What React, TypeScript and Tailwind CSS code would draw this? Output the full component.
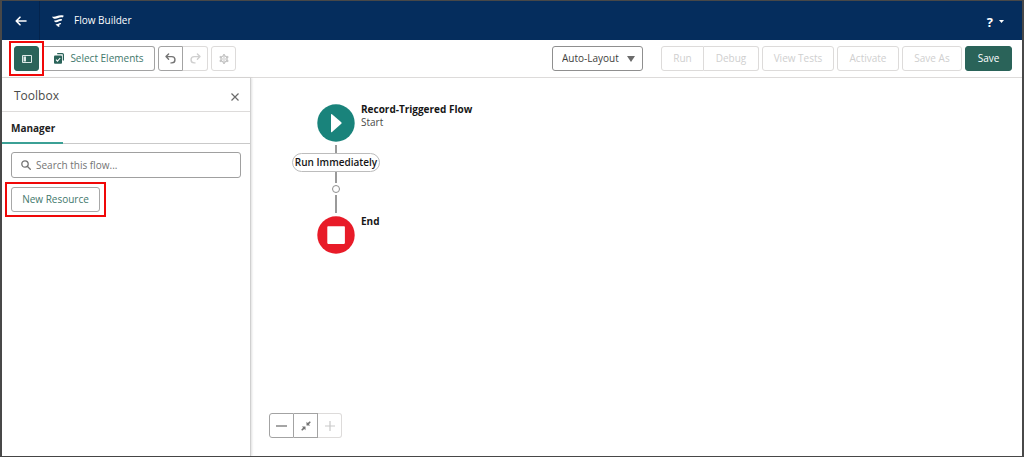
import type { ButtonHTMLAttributes } from "react";

function Button({ className = "", ...rest }: ButtonHTMLAttributes<HTMLButtonElement>) {
  return (
    <button
      type="button"
      className={`flex h-[25px] shrink-0 items-center justify-center whitespace-nowrap border ${className}`}
      {...rest}
    />
  );
}

function Highlight({ className }: { className: string }) {
  return <span aria-hidden="true" className={`pointer-events-none absolute border-[#f00808] ${className}`} />;
}

function Header() {
  return (
    <header className="flex h-[39px] shrink-0 items-center bg-[#052d5d] text-white">
      <a href="#back" aria-label="Back" className="flex h-full w-[38px] items-center justify-center border-r border-[#04244d]">
        <svg width="12" height="10" viewBox="0 0 12 10" fill="none" stroke="currentColor" strokeWidth="1.6" strokeLinecap="round" strokeLinejoin="round">
          <path d="M11 5H1.2M5 1.2L1.2 5L5 8.8" />
        </svg>
      </a>
      <svg className="ml-3" width="12" height="12" viewBox="0 0 12 12" fill="currentColor">
        <path d="M.2 1.5C3.4 3 6-.8 11.4 .6Q11.9 .8 11.5 1.3L10.7 2.4C6.8 1.6 4.6 5 1.2 3.2Q.3 2.6 .2 1.5Z" />
        <path d="M2.2 5.4C4.6 6.4 6.2 3.6 9.8 4.2Q10.3 4.4 10 4.9L9.4 5.8C6.8 5.6 5.4 8.2 3 6.9Q2.3 6.4 2.2 5.4Z" />
        <path d="M3.6 9C5.4 10 6.6 7.6 8.8 8Q9.3 8.2 9 8.6L8.4 9.4C6.8 9.4 6.8 11.2 8 11C6.6 12.4 5.6 11.6 5.4 10.7Q4 10.6 3.6 9Z" />
      </svg>
      <h1 className="ml-2.5 text-[10px]">Flow Builder</h1>
      <button type="button" aria-label="Help" className="ml-auto mr-[18px] flex items-center gap-1.5 pt-0.5">
        <span className="text-[13px] font-bold leading-4">?</span>
        <svg width="5" height="3" viewBox="0 0 5 3" fill="currentColor"><path d="M0 0H5L2.5 3Z" /></svg>
      </button>
    </header>
  );
}

function Toolbar() {
  return (
    <div className="flex h-[38px] shrink-0 items-center border-b border-[#dddbda] pl-3 pr-2.5">
      <div className="relative z-10 bg-white pr-[5px]">
        <div className="relative">
          <Button aria-label="Toggle toolbox" className="w-[25px] rounded-[3px] border-[#2a6359] bg-[#2a6359] text-white">
            <svg width="10" height="8" viewBox="0 0 10 8" fill="none">
              <path d="M.5 .5H9.5V7.5H.5Z" stroke="#dce9e6" />
              <path d="M1.5 1.5H4V6.5H1.5Z" fill="#dce9e6" />
            </svg>
          </Button>
          <Highlight className="-inset-[5px] border-2" />
        </div>
      </div>
      <Button className="w-[111px] rounded-r-[3px] border-l-0 border-[#a3a3a3] text-[#3f786c]">
        <svg className="mr-1.5" width="10" height="11" viewBox="0 0 10 11" fill="none">
          <path d="M3.2 .6H8.4Q9.4 .6 9.4 1.6V7.4" stroke="#2a6359" strokeWidth="1.2" />
          <rect x="0" y="2.4" width="8" height="8.4" rx="1" fill="#2a6359" />
          <path d="M2 6.6L3.5 8.1L6.2 5" stroke="#fff" strokeWidth="1.1" />
        </svg>
        Select Elements
      </Button>
      <div className="ml-[3px] flex">
        <Button aria-label="Undo" className="w-[25px] rounded-l-[3px] border-[#a3a3a3] text-[#747474]">
          <svg width="11" height="11" viewBox="0 0 11 11" fill="none" stroke="currentColor" strokeWidth="1.4" strokeLinecap="round" strokeLinejoin="round">
            <path d="M3.6 1L1 3.6L3.6 6.2M1.3 3.6H6.8A3.1 3.1 0 0 1 6.8 9.9H6" />
          </svg>
        </Button>
        <Button aria-label="Redo" disabled className="w-[25px] rounded-r-[3px] border-l-0 border-[#dddbda] text-[#cfcfcf]">
          <svg width="11" height="11" viewBox="0 0 11 11" fill="none" stroke="currentColor" strokeWidth="1.4" strokeLinecap="round" strokeLinejoin="round">
            <path d="M7.4 1L10 3.6L7.4 6.2M9.7 3.6H4.2A3.1 3.1 0 0 0 4.2 9.9H5" />
          </svg>
        </Button>
      </div>
      <Button aria-label="Settings" disabled className="ml-[3px] w-[25px] rounded-[3px] border-[#dddbda] text-[#c4c4c4]">
        <svg width="10" height="10" viewBox="0 0 10 10" fill="none" stroke="currentColor">
          <circle cx="5" cy="5" r="3.1" strokeWidth="1.3" />
          <circle cx="5" cy="5" r="1.3" strokeWidth=".8" />
          <path d="M5 0V1.8M5 8.2V10M.7 2.5L2.2 3.4M7.8 6.6L9.3 7.5M.7 7.5L2.2 6.6M7.8 3.4L9.3 2.5" strokeWidth="1.7" />
        </svg>
      </Button>

      <div className="relative ml-auto">
        <select aria-label="Layout" className="h-[25px] w-[91px] appearance-none rounded-[3px] border border-[#8f8f8f] bg-white pl-[9px] text-[10px] text-[#3e3e3c]">
          <option>Auto-Layout</option>
          <option>Free-Form</option>
        </select>
        <svg className="pointer-events-none absolute right-2 top-2.5" width="8" height="6" viewBox="0 0 8 6" fill="#6b6b6b"><path d="M0 0H8L4 6Z" /></svg>
      </div>
      <div className="ml-[18px] flex">
        <Button disabled className="w-[43px] rounded-l-[3px] border-[#dddbda] text-[#cfcfcf]">Run</Button>
        <Button disabled className="w-[55px] rounded-r-[3px] border-l-0 border-[#dddbda] text-[#cfcfcf]">Debug</Button>
      </div>
      <div className="ml-[3px] flex gap-[3px]">
        <Button disabled className="w-[72px] rounded-[3px] border-[#dddbda] text-[#cfcfcf]">View Tests</Button>
        <Button disabled className="w-[62px] rounded-[3px] border-[#dddbda] text-[#cfcfcf]">Activate</Button>
        <Button disabled className="w-[60px] rounded-[3px] border-[#dddbda] text-[#cfcfcf]">Save As</Button>
        <Button className="w-[47px] rounded-[3px] border-[#2a6359] bg-[#2a6359] text-white">Save</Button>
      </div>
    </div>
  );
}

function Toolbox() {
  return (
    <aside className="w-[249px] shrink-0 border-r border-[#d0d0d0] shadow-[1px_0_2px_rgba(0,0,0,0.12)]">
      <div className="flex h-[34px] items-center justify-between border-b border-[#dddbda] pl-3 pr-[9px]">
        <h2 className="pt-0.5 text-[12px] text-[#4a4a48]">Toolbox</h2>
        <button type="button" aria-label="Close toolbox" className="p-0.5 pt-1.5 text-[#6b6b6b]">
          <svg width="8" height="8" viewBox="0 0 8 8" stroke="currentColor" strokeWidth="1.2"><path d="M.5 .5L7.5 7.5M7.5 .5L.5 7.5" /></svg>
        </button>
      </div>
      <div role="tablist" className="flex h-8 border-b border-[#c9c9c9]">
        <button type="button" role="tab" aria-selected="true" className="-mb-px w-[61px] border-b-2 border-[#3ba095] pl-[9px] pt-0.5 text-left font-bold text-[#222]">
          Manager
        </button>
      </div>
      <div className="flex flex-col items-start gap-[9px] px-[9px] pt-2">
        <label className="flex h-[26px] w-full items-center gap-[5px] rounded-[3px] border border-[#a0a0a0] px-[9px]">
          <svg className="shrink-0" width="10" height="10" viewBox="0 0 10 10" fill="none" stroke="#747474" strokeWidth="1.3" strokeLinecap="round">
            <circle cx="4" cy="4" r="3.2" /><path d="M6.5 6.5L9.3 9.3" />
          </svg>
          <input type="search" aria-label="Search this flow" placeholder="Search this flow..." className="min-w-0 flex-1 bg-transparent outline-none placeholder:text-[#747474]" />
        </label>
        <div className="relative">
          <Button className="w-[89px] rounded-[3px] border-[#a8a8a8] text-[#3f786c]">New Resource</Button>
          <Highlight className="-inset-x-1.5 -inset-y-[5px] border-2" />
        </div>
      </div>
    </aside>
  );
}

function Flow() {
  return (
    <div className="grid grid-cols-[88px_1fr] gap-x-1.5 leading-[13px] text-[#161616]">
      <svg className="justify-self-center" width="38" height="38" viewBox="0 0 38 38">
        <circle cx="19" cy="19" r="18.7" fill="#19837b" />
        <path d="M14 10.5Q14 9.5 15 10.2L24.3 18.3Q25 19 24.3 19.7L15 28Q14 28.7 14 27.7Z" fill="#fff" />
      </svg>
      <div className="-ml-[25px] -mt-px">
        <p className="font-bold">Record-Triggered Flow</p>
        <p className="text-[#4a4a48]">Start</p>
      </div>
      <div className="col-start-1 flex flex-col items-center">
        <span className="mt-[3px] h-2 w-0.5 bg-[#9a9a9a]" />
        <span className="flex h-[19px] w-[88px] items-center justify-center whitespace-nowrap rounded-full border border-[#bcbcbc] bg-white font-semibold">
          Run Immediately
        </span>
        <span className="h-[11px] w-0.5 bg-[#9a9a9a]" />
        <button type="button" aria-label="Add element" className="my-0.5 size-2 rounded-full border border-[#8f8f8f] bg-white" />
        <span className="mb-[3px] h-[18px] w-0.5 bg-[#9a9a9a]" />
      </div>
      <svg className="col-start-1 justify-self-center" width="38" height="38" viewBox="0 0 38 38">
        <circle cx="19" cy="19" r="18.7" fill="#e81b28" />
        <rect x="10.3" y="10.3" width="17.6" height="17.6" rx=".8" fill="#fff" />
      </svg>
      <p className="-ml-[25px] -mt-px font-bold">End</p>
    </div>
  );
}

function ZoomControls() {
  return (
    <div className="mt-auto flex">
      <Button aria-label="Zoom out" className="w-[25px] rounded-l-[3px] border-[#a3a3a3] text-[#747474]">
        <svg width="11" height="2" viewBox="0 0 11 2"><path d="M0 1H11" stroke="currentColor" strokeWidth="1.3" /></svg>
      </Button>
      <Button aria-label="Zoom to fit" className="w-6 border-l-0 border-[#a3a3a3] text-[#747474]">
        <svg width="10" height="10" viewBox="0 0 10 10" fill="currentColor">
          <path d="M5.5 .8V4.5H9.2L7.9 3.3L9.8 1.2L8.8 .2L6.7 2.1Z" />
          <path d="M4.5 9.2V5.5H.8L2.1 6.7L.2 8.8L1.2 9.8L3.3 7.9Z" />
        </svg>
      </Button>
      <Button aria-label="Zoom in" disabled className="w-6 rounded-r-[3px] border-l-0 border-[#dddbda] text-[#c9c9c9]">
        <svg width="10" height="10" viewBox="0 0 10 10"><path d="M0 5H10M5 0V10" stroke="currentColor" strokeWidth="1.2" /></svg>
      </Button>
    </div>
  );
}

export default function App() {
  return (
    <div className="flex min-h-screen flex-col border border-x-2 border-[#484848] bg-white font-['Open_Sans','Noto_Sans',sans-serif] text-[10px]">
      <Header />
      <Toolbar />
      <div className="flex flex-1">
        <Toolbox />
        <main className="flex min-w-0 flex-1 flex-col items-start pb-[18px] pl-[18px] pt-[26px]">
          <div className="pl-[23px]">
            <Flow />
          </div>
          <ZoomControls />
        </main>
      </div>
    </div>
  );
}
